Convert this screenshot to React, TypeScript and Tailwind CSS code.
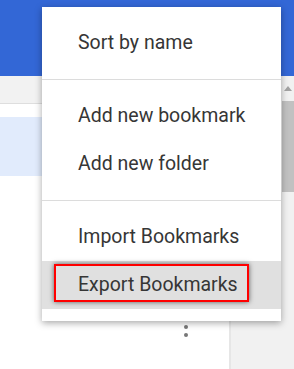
import { ReactNode } from "react";

function MenuItem({ children, active }: { children: ReactNode; active?: boolean }) {
  return (
    <div
      className={
        "relative flex h-12 items-center pl-9 text-[19.5px] text-[#363636] " +
        (active ? "bg-[#e0e0e0]" : "")
      }
    >
      {active ? (
        <span className="absolute left-3 top-[3px] h-[38px] w-[195px] border-2 border-[#ff0000] shadow-[0_0_5px_rgba(0,0,0,0.6)]" />
      ) : null}
      <span className="relative">{children}</span>
    </div>
  );
}

function Divider() {
  return <div className="my-3 h-px bg-[#dcdcdc]" />;
}

export default function App() {
  return (
    <div className="relative h-[369px] w-[294px] overflow-hidden bg-white font-['Roboto',sans-serif]">
      <div className="h-[76px] bg-[#3367d6]" />

      <div className="flex h-[293px]">
        <div className="flex flex-1 flex-col">
          <div className="h-[28px] border-b border-[#dedede] bg-[#f2f2f2]" />
          <div className="flex flex-1">
            <div className="flex w-[231px] flex-col border-r-2 border-[#e6e6e6] bg-white pt-[13px]">
              <div className="h-[59px] bg-[#e1ebfc]" />
              <div className="ml-[184px] mt-[141px] flex flex-col gap-1">
                <span className="h-1 w-1 rounded-full bg-[#777777]" />
                <span className="h-1 w-1 rounded-full bg-[#777777]" />
                <span className="h-1 w-1 rounded-full bg-[#777777]" />
              </div>
            </div>
            <div className="flex-1 bg-[#f1f1f1]" />
          </div>
        </div>

        <div className="flex w-[13px] flex-col bg-[#f1f1f1]">
          <div className="flex h-[25px] items-center justify-center">
            <svg width="8" height="5" viewBox="0 0 8 5">
              <path d="M0 5 L4 0 L8 5 Z" fill="#a3a3a3" />
            </svg>
          </div>
          <div className="ml-px h-[91px] bg-[#c1c1c1]" />
        </div>
      </div>

      <div className="absolute left-[42px] top-[7px] w-[239px] bg-white py-3 shadow-[0_2px_7px_rgba(0,0,0,0.35)]">
        <MenuItem>Sort by name</MenuItem>
        <Divider />
        <MenuItem>Add new bookmark</MenuItem>
        <MenuItem>Add new folder</MenuItem>
        <Divider />
        <MenuItem>Import Bookmarks</MenuItem>
        <MenuItem active>Export Bookmarks</MenuItem>
      </div>
    </div>
  );
}
